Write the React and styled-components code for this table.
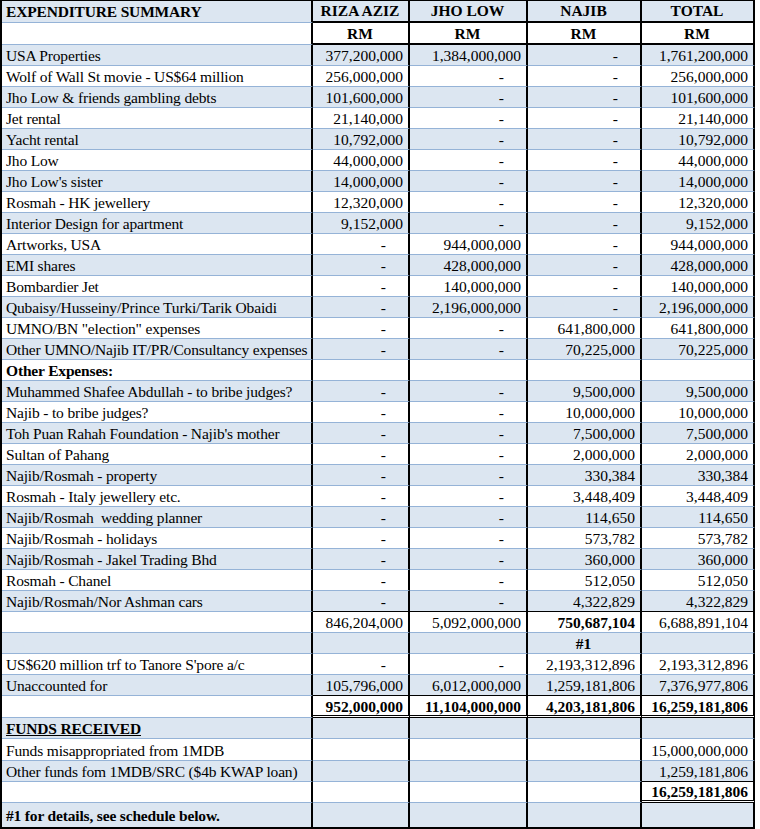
import React from 'react'
import styled, { createGlobalStyle } from 'styled-components'

const GlobalStyle = createGlobalStyle`
  body {
    margin: 0;
    background: #fff;
  }
`

// --- Styled Components --- //
const COLS = '311px 97px 118px 114px 113px'

const LINES = {
  grid: '1px solid #95b3d7',
  black: '1px solid #000',
  thick: '2px solid #000',
  double: '3px double #000',
}

const Sheet = styled.div`
  box-sizing: border-box;
  width: 755px;
  border-left: 2px solid #000;
  border-top: 1px solid #000;
  border-bottom: 2px solid #000;
  font-family: "Liberation Serif", "Times New Roman", serif;
  font-size: 15.5px;
  color: #000;
`

const Row = styled.div`
  display: grid;
  grid-template-columns: ${COLS};
  height: ${p => p.$h || 21}px;
  background: ${p => (p.$shade ? '#dce6f1' : '#fff')};
`

const Cell = styled.div`
  box-sizing: border-box;
  display: flex;
  align-items: center;
  justify-content: ${p =>
    p.$align === 'center' ? 'center' : p.$align === 'left' ? 'flex-start' : 'flex-end'};
  padding: ${p => (p.$head ? '0' : '2px')} 5px 0 4px;
  border-right: 2px solid #000;
  border-bottom: ${p => LINES[p.$line || 'grid']};
  font-weight: ${p => (p.$bold ? 700 : 400)};
  letter-spacing: ${p => (p.$align === 'left' ? '-0.17px' : '0')};
  text-decoration: ${p => (p.$under ? 'underline' : 'none')};
  white-space: nowrap;
  overflow: hidden;
  line-height: 1;
`

const Dash = styled.span`
  padding-right: 17px;
`

// --- Data --- //
const D = '-'

const rows = [
  { label: 'USA Properties', vals: ['377,200,000', '1,384,000,000', D, '1,761,200,000'] },
  { label: 'Wolf of Wall St movie - US$64 million', vals: ['256,000,000', D, D, '256,000,000'] },
  { label: 'Jho Low & friends gambling debts', vals: ['101,600,000', D, D, '101,600,000'] },
  { label: 'Jet rental', vals: ['21,140,000', D, D, '21,140,000'] },
  { label: 'Yacht rental', vals: ['10,792,000', D, D, '10,792,000'] },
  { label: 'Jho Low', vals: ['44,000,000', D, D, '44,000,000'] },
  { label: "Jho Low's sister", vals: ['14,000,000', D, D, '14,000,000'] },
  { label: 'Rosmah - HK jewellery', vals: ['12,320,000', D, D, '12,320,000'] },
  { label: 'Interior Design for apartment', vals: ['9,152,000', D, D, '9,152,000'] },
  { label: 'Artworks, USA', vals: [D, '944,000,000', D, '944,000,000'] },
  { label: 'EMI shares', vals: [D, '428,000,000', D, '428,000,000'] },
  { label: 'Bombardier Jet', vals: [D, '140,000,000', D, '140,000,000'] },
  { label: 'Qubaisy/Husseiny/Prince Turki/Tarik Obaidi', vals: [D, '2,196,000,000', D, '2,196,000,000'] },
  { label: 'UMNO/BN "election" expenses', vals: [D, D, '641,800,000', '641,800,000'] },
  { label: 'Other UMNO/Najib IT/PR/Consultancy expenses', vals: [D, D, '70,225,000', '70,225,000'] },
  { label: 'Other Expenses:', bold: true, vals: ['', '', '', ''] },
  { label: 'Muhammed Shafee Abdullah - to bribe judges?', vals: [D, D, '9,500,000', '9,500,000'] },
  { label: 'Najib - to bribe judges?', vals: [D, D, '10,000,000', '10,000,000'] },
  { label: "Toh Puan Rahah Foundation - Najib's mother", vals: [D, D, '7,500,000', '7,500,000'] },
  { label: 'Sultan of Pahang', vals: [D, D, '2,000,000', '2,000,000'] },
  { label: 'Najib/Rosmah - property', vals: [D, D, '330,384', '330,384'] },
  { label: 'Rosmah - Italy jewellery etc.', vals: [D, D, '3,448,409', '3,448,409'] },
  { label: 'Najib/Rosmah\u00a0 wedding planner', vals: [D, D, '114,650', '114,650'] },
  { label: 'Najib/Rosmah - holidays', vals: [D, D, '573,782', '573,782'] },
  { label: 'Najib/Rosmah - Jakel Trading Bhd', vals: [D, D, '360,000', '360,000'] },
  { label: 'Rosmah - Chanel', vals: [D, D, '512,050', '512,050'] },
  { label: 'Najib/Rosmah/Nor Ashman cars', vals: [D, D, '4,322,829', '4,322,829'], line: 'black' },
  {
    label: '',
    vals: ['846,204,000', '5,092,000,000', '750,687,104', '6,688,891,104'],
    boldCols: [2],
  },
  { label: '', vals: ['', '', '#1', ''], boldCols: [2], centerCols: [2] },
  { label: "US$620 million trf to Tanore S'pore a/c", vals: [D, D, '2,193,312,896', '2,193,312,896'] },
  {
    label: 'Unaccounted for',
    vals: ['105,796,000', '6,012,000,000', '1,259,181,806', '7,376,977,806'],
    line: 'black',
  },
  {
    label: '',
    vals: ['952,000,000', '11,104,000,000', '4,203,181,806', '16,259,181,806'],
    boldCols: [0, 1, 2, 3],
    line: 'double',
    h: 22,
  },
  { label: 'FUNDS RECEIVED', bold: true, under: true, vals: ['', '', '', ''] },
  { label: 'Funds misappropriated from 1MDB', vals: ['', '', '', '15,000,000,000'], h: 22 },
  {
    label: 'Other funds fom 1MDB/SRC ($4b KWAP loan)',
    vals: ['', '', '', '1,259,181,806'],
    line: [null, null, null, 'black'],
  },
  {
    label: '',
    vals: ['', '', '', '16,259,181,806'],
    boldCols: [3],
    line: [null, null, null, 'double'],
  },
  { label: '#1 for details, see schedule below.', bold: true, vals: ['', '', '', ''], h: 24, last: true },
]

const HEADS = ['RIZA AZIZ', 'JHO LOW', 'NAJIB', 'TOTAL']

const lineFor = (row, i) => {
  if (Array.isArray(row.line)) return row.line[i] || undefined
  return row.line
}

// --- Component --- //
const App = () => {
  return (
    <>
      <GlobalStyle />
      <Sheet>
        <Row $h={22} $shade>
          <Cell $head $align="left" $bold>EXPENDITURE SUMMARY</Cell>
          {HEADS.map(h => (
            <Cell key={h} $head $align="center" $bold $line="thick">{h}</Cell>
          ))}
        </Row>
        <Row $h={22}>
          <Cell $align="left" />
          {HEADS.map(h => (
            <Cell key={h} $align="center" $bold $line="thick">RM</Cell>
          ))}
        </Row>

        {rows.map((row, r) => (
          <Row key={r} $h={row.h} $shade={r % 2 === 0}>
            <Cell
              $align="left"
              $bold={row.bold}
              $under={row.under}
              $line={row.last ? 'none' : undefined}
            >
              {row.label}
            </Cell>
            {row.vals.map((v, i) => (
              <Cell
                key={i}
                $align={row.centerCols?.includes(i) ? 'center' : 'right'}
                $bold={row.boldCols?.includes(i)}
                $line={row.last ? 'none' : lineFor(row, i)}
              >
                {v === D ? <Dash>-</Dash> : v}
              </Cell>
            ))}
          </Row>
        ))}
      </Sheet>
    </>
  )
}

export default App
